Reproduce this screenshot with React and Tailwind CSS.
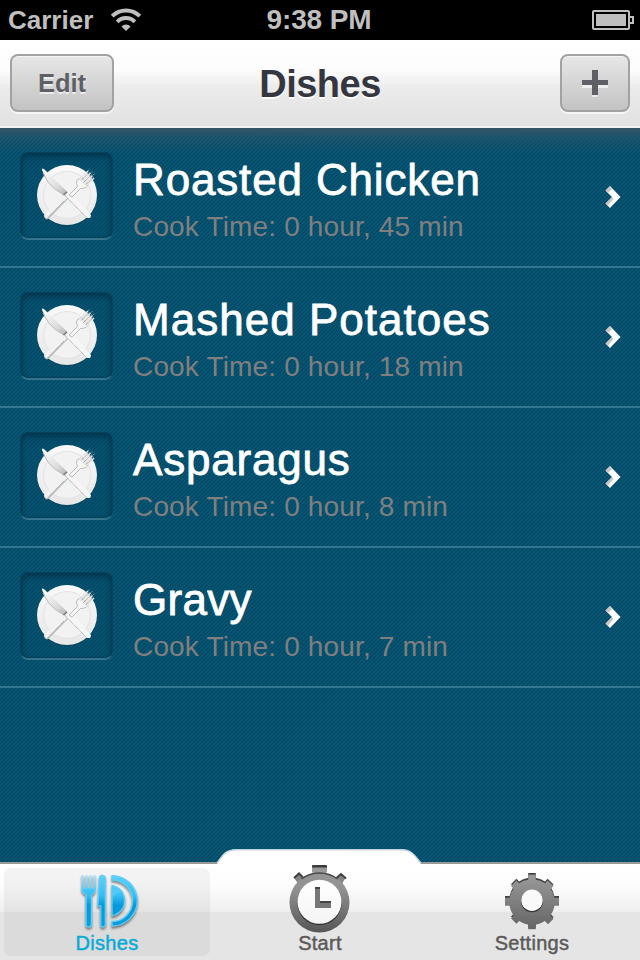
import React from "react";

const dishes = [
  { name: "Roasted Chicken", time: "Cook Time: 0 hour, 45 min", track: "tracking-[0.85px]" },
  { name: "Mashed Potatoes", time: "Cook Time: 0 hour, 18 min", track: "tracking-[1.03px]" },
  { name: "Asparagus", time: "Cook Time: 0 hour, 8 min", track: "tracking-[0.8px]" },
  { name: "Gravy", time: "Cook Time: 0 hour, 7 min", track: "tracking-[0.3px]" },
];

function StatusBar() {
  return (
    <div className="flex h-10 shrink-0 items-center bg-black font-bold text-[#bfbfbf]">
      <div className="flex w-[219px] items-center pl-2">
        <span className="w-[102px] text-[26px] leading-10">Carrier</span>
        <svg width="32" height="24" viewBox="0 0 32 24" fill="none" stroke="#bfbfbf" strokeWidth="4">
          <path d="M2.2 8.2 A19.5 19.5 0 0 1 29.8 8.2" />
          <path d="M7.2 13.8 A12.2 12.2 0 0 1 24.8 13.8" />
          <path d="M16 23 L11.4 18.4 A6.4 6.4 0 0 1 20.6 18.4 Z" fill="#bfbfbf" stroke="none" />
        </svg>
      </div>
      <div className="w-[200px] text-center text-[28px] leading-10 tracking-[-0.1px]">9:38 PM</div>
      <div className="flex w-[221px] justify-end pr-[6px]">
        <svg width="42" height="20" viewBox="0 0 42 20">
          <rect x="1" y="1" width="36" height="18" rx="1" fill="none" stroke="#bfbfbf" strokeWidth="2" />
          <rect x="4" y="4" width="30" height="12" fill="#bfbfbf" />
          <path d="M38 7H41V13H38" fill="none" stroke="#bfbfbf" strokeWidth="2" />
        </svg>
      </div>
    </div>
  );
}

function NavBar() {
  const button =
    "flex h-[58px] items-center justify-center rounded-[8px] border-2 border-[#a2a2a2] bg-linear-to-b from-[#e7e7e7] to-[#c3c3c3] shadow-[0_2px_0_rgba(255,255,255,0.7),inset_0_1px_0_rgba(255,255,255,0.6)]";
  return (
    <div className="flex h-[88px] shrink-0 items-start justify-between border-b-2 border-[#f2f2f2] bg-[linear-gradient(#ffffff_0%,#fcfcfc_35%,#ebebeb_56%,#e2e2e2_100%)] px-[10px] pt-[14px]">
      <div className={button + " w-[104px]"}>
        <span className="text-[25.5px] leading-[58px] font-bold tracking-[-0.1px] text-[#5f5f66] [text-shadow:0_2px_0_rgba(255,255,255,0.6)]">Edit</span>
      </div>
      <div className="pr-[34px] text-[38px] leading-[61px] font-bold tracking-[-0.5px] text-[#353740] [text-shadow:0_2px_0_rgba(255,255,255,0.8)]">Dishes</div>
      <div className={button + " w-[70px]"}>
        <svg width="26" height="28" viewBox="0 0 26 28">
          <path d="M10 3h6v10h10v6H16v10h-6V19H0v-6h10z" fill="#fff" opacity=".6" />
          <path d="M10 1h6v10h10v5H16v10h-6V16H0v-5h10z" fill="#5f5f66" />
        </svg>
      </div>
    </div>
  );
}

function Plate() {
  return (
    <svg className="-mt-0.5" width="68" height="66" viewBox="0 0 68 66">
      <defs>
        <linearGradient id="plate" x1="0" y1="0" x2="0" y2="1">
          <stop offset="0" stopColor="#fafafa" />
          <stop offset="1" stopColor="#e6e6e6" />
        </linearGradient>
        <linearGradient id="blade" x1="0" y1="0" x2="1" y2="1">
          <stop offset="0" stopColor="#ffffff" />
          <stop offset=".65" stopColor="#dcdcdc" />
          <stop offset="1" stopColor="#b0b0b0" />
        </linearGradient>
      </defs>
      <circle cx="34" cy="34" r="30" fill="#033d55" opacity=".6" />
      <circle cx="34" cy="33" r="30" fill="url(#plate)" />
      <circle cx="34" cy="33" r="23.5" fill="#f2f2f2" stroke="#e3e3e3" strokeWidth="1" />
      <path d="M35 33L14 54.5" stroke="#bbbbbb" strokeWidth="5.4" strokeLinecap="round" />
      <path d="M34.5 32.5L13.5 53.5" stroke="#f2f2f2" strokeWidth="4.6" strokeLinecap="round" />
      <path d="M31.5 33L36 29L58 53Q58 57.5 53.5 55.5Z" fill="#f6f6f6" />
      <path d="M31.5 33L53 55" stroke="#999" strokeWidth="1" strokeDasharray="1 .7" />
      <path d="M15 55.5L31 39" stroke="#999" strokeWidth="1" strokeDasharray="1 .7" />
      <path d="M9 8Q9 5 12.5 8.5L34.5 30L31 33Q19 27 15 20Z" fill="url(#blade)" />
      <path d="M10 11L15 20Q20 27 31 33" fill="none" stroke="#bbb" strokeWidth="1" />
      <path d="M30.5 33L34 30" stroke="#777" strokeWidth="1.6" />
      <path d="M36 33L44.5 24.5Q42 17.5 46 17L48 15.5L55 22.5Q54 26.5 47.5 26.5L39 35Z" fill="#f5f5f5" stroke="#b4b4b4" strokeWidth=".9" />
      <path d="M46.5 17.5L55 9M49 19.5L57.5 11M51 22L59.5 13.5M53.5 23.5L61 16" stroke="#e6e6e6" strokeWidth="1.5" />
      <path d="M48 18.5L56.5 10M50 21L58.5 12.5M52.5 23L60.5 15" stroke="#979797" strokeWidth=".7" />
      <path d="M55 9L56.5 7.5M57.5 11L59.5 9M59.5 13.5L61.5 11.5" stroke="#74909c" strokeWidth="1" />
    </svg>
  );
}

function DishRow({ dish }) {
  return (
    <div className="flex h-[140px] shrink-0 items-start border-b-2 border-[#347590] pl-5">
      <div className="mt-6 flex h-[87px] w-[93px] shrink-0 items-center justify-center rounded-[8px] border border-[#07415a] border-b-[#33708a] bg-[#004866]/20 shadow-[inset_0_4px_6px_rgba(0,25,40,0.4),inset_0_0_3px_rgba(0,25,40,0.3),0_1px_0_#3b748d]">
        <Plate />
      </div>
      <div className="min-w-0 flex-1 pt-[26px] pl-[20px] whitespace-nowrap">
        <div className={"text-[44px] leading-[52px] text-white [-webkit-text-stroke:0.8px_white] " + dish.track}>{dish.name}</div>
        <div className="text-[28px] leading-[42px] tracking-[0.16px] text-[#7f7f80]">{dish.time}</div>
      </div>
      <svg className="mt-[57px] mr-[19px] shrink-0" width="16" height="24" viewBox="0 0 16 24">
        <path d="M.5 5.5L5 1L15.5 12L5 23L.5 18.5L7 12Z" fill="#fff" />
        <path d="M.5 5.5L4.5 1.5L7 4L3 8ZM.5 18.5L7 12L8.5 14L3 20.5Z" fill="#c6c6c6" />
      </svg>
    </div>
  );
}

function DishesIcon() {
  return (
    <svg className="drop-shadow-[0_2px_1px_rgba(0,0,0,0.45)]" width="60" height="56" viewBox="0 0 60 56">
      <defs>
        <linearGradient id="cyan" x1="0" y1="2" x2="0" y2="54" gradientUnits="userSpaceOnUse">
          <stop offset="0" stopColor="#5fd2fc" />
          <stop offset=".4" stopColor="#35bdf3" />
          <stop offset=".58" stopColor="#0799db" />
          <stop offset="1" stopColor="#0a9ddd" />
        </linearGradient>
        <linearGradient id="tines" x1="0" y1="0" x2="0" y2="1">
          <stop offset="0" stopColor="#b5e4f8" />
          <stop offset="1" stopColor="#5fccf6" />
        </linearGradient>
      </defs>
      <path d="M2.5 2H4.7V15H6.4V2H8.6V15H10.4V2H12.6V15H14.4V2H16.6V16H2.5Z" fill="url(#tines)" />
      <g fill="url(#cyan)" stroke="#5bcff7" strokeWidth="1.3">
        <path d="M3.1 15.5H16V18Q15.5 20 12.4 22V52Q12 54 9.6 54T7.1 52V22Q3.6 20 3.1 18Z" />
        <path d="M20.5 5Q20.5 2.5 23 2.5Q26.3 2.5 26.3 6V51.5Q26 54 23.8 54T21.8 51.5V33H18.8Z" />
        <path d="M33 12.5A16 15.5 0 0 1 33 42.8Z" />
        <path d="M33 2.6A25.2 25.2 0 0 1 33 53V48.5A20.6 20.6 0 0 0 33 7.2Z" />
      </g>
      <path d="M33.6 13.4Q40.5 14.5 44.5 19Q38 20 33.6 23.5Z" fill="#54caf8" opacity=".8" />
    </svg>
  );
}

function StartIcon() {
  return (
    <svg width="62" height="70" viewBox="0 0 62 70">
      <defs>
        <linearGradient id="steel" x1="0" y1="0" x2="0" y2="70" gradientUnits="userSpaceOnUse">
          <stop offset="0" stopColor="#969696" />
          <stop offset=".35" stopColor="#929292" />
          <stop offset="1" stopColor="#545454" />
        </linearGradient>
        <linearGradient id="face" x1="0" y1="0" x2="0" y2="1">
          <stop offset="0" stopColor="#fff" />
          <stop offset="1" stopColor="#f4f4f4" />
        </linearGradient>
      </defs>
      <rect x="23" y="1" width="15" height="8" rx="1.5" fill="#999" />
      <path d="M23 3.5V2Q23 1 24.5 1H36.5Q38 1 38 2V3.5Z" fill="#3b3b3b" />
      <g fill="#858585">
        <path d="M5 14L10 9.5L14.5 14L19 12L9 22L8 18Z" />
        <path d="M56.5 14L52 9.5L47.5 14L42 12L53 22L54 18Z" />
      </g>
      <path d="M5 14L10 9.5L14 13.5M57 14.5L52 10L47.5 14" fill="none" stroke="#424242" strokeWidth="2" />
      <circle cx="30.5" cy="38.5" r="30" fill="url(#steel)" />
      <path d="M12.5 15A30 30 0 0 1 48.5 15" fill="none" stroke="#484848" strokeWidth="1.5" />
      <circle cx="30.5" cy="39" r="22.2" fill="#333" />
      <circle cx="30.5" cy="37.8" r="22" fill="url(#face)" />
      <path d="M26 23H31V37H42V44H26Z" fill="#777" />
      <path d="M26 23H31V25H26ZM31 37H42V39H31Z" fill="#444" />
    </svg>
  );
}

function SettingsIcon() {
  return (
    <svg width="56" height="58" viewBox="0 0 56 58">
      <defs>
        <linearGradient id="gear" x1="0" y1="0" x2="0" y2="58" gradientUnits="userSpaceOnUse">
          <stop offset="0" stopColor="#9b9b9b" />
          <stop offset="1" stopColor="#626262" />
        </linearGradient>
        <g id="cog">
          <circle cx="28" cy="28.4" r="22.8" />
          <path d="M24.2 1H31.8V55.5H24.2Z" />
          <path d="M1 24H55V32H1Z" />
          <path d="M7 12.2L12.4 6.8L49.5 45L44 50.5Z" />
          <path d="M43.6 6.8L49.5 12.4L12.4 50L7 44.6Z" />
        </g>
      </defs>
      <use href="#cog" fill="#414141" />
      <use href="#cog" y="1.7" fill="url(#gear)" />
      <circle cx="28" cy="29.2" r="11" fill="#363636" />
      <circle cx="28" cy="28.2" r="10.7" fill="#f9f9f9" />
    </svg>
  );
}

const label = "text-[20px] leading-6 tracking-[0.3px] [-webkit-text-stroke:0.45px_currentColor]";

function TabBar() {
  return (
    <div className="relative isolate h-[111px] shrink-0 overflow-hidden">
      <svg className="absolute inset-0 -z-10" width="640" height="111" viewBox="0 0 640 111">
        <defs>
          <linearGradient id="bar" x1="0" y1="15" x2="0" y2="111" gradientUnits="userSpaceOnUse">
            <stop offset="0" stopColor="#fff" />
            <stop offset=".2" stopColor="#fdfdfd" />
            <stop offset=".5" stopColor="#efefef" />
            <stop offset=".5" stopColor="#e5e5e5" />
            <stop offset="1" stopColor="#e5e5e5" />
          </linearGradient>
        </defs>
        <path d="M0 13H218V15H0ZM420 13H640V15H420Z" fill="#999" />
        <path d="M0 15H217C221 9 224 .5 236 .5H402C413 .5 416 9 421 15H640V111H0Z" fill="url(#bar)" />
        <path d="M217 14C221 9 224 .8 236 .8H402C413 .8 416 9 421 14" fill="none" stroke="#c6d5dd" strokeWidth="1.4" />
      </svg>
      <div className="flex h-full px-1">
        <div className="mt-[19px] mb-1 flex w-[206px] shrink-0 flex-col items-center rounded-[7px] bg-black/[0.045] pt-[5px] text-[#08aad6]">
          <div className="pl-1">
            <DishesIcon />
          </div>
          <span className={label + " mt-[2px]"}>Dishes</span>
        </div>
        <div className="flex w-[220px] shrink-0 flex-col items-center pt-[15px] text-[#5a5a5a]">
          <StartIcon />
          <span className={label + " -mt-[3px]"}>Start</span>
        </div>
        <div className="flex w-[204px] shrink-0 flex-col items-center pt-[23px] text-[#5a5a5a]">
          <SettingsIcon />
          <span className={label + " mt-px"}>Settings</span>
        </div>
      </div>
    </div>
  );
}

export default function App() {
  return (
    <div className="flex h-[960px] w-[640px] flex-col overflow-hidden bg-[#04506e] bg-[repeating-linear-gradient(135deg,#004866_0px,#0c5975_1.414px,#004866_2.828px)] font-['Liberation_Sans',Arial,sans-serif]">
      <StatusBar />
      <NavBar />
      <div className="flex flex-1 flex-col bg-[linear-gradient(#475761b8_0px,#37586966_10px,transparent_26px)]">
        {dishes.map((dish) => (
          <DishRow key={dish.name} dish={dish} />
        ))}
      </div>
      <TabBar />
    </div>
  );
}
